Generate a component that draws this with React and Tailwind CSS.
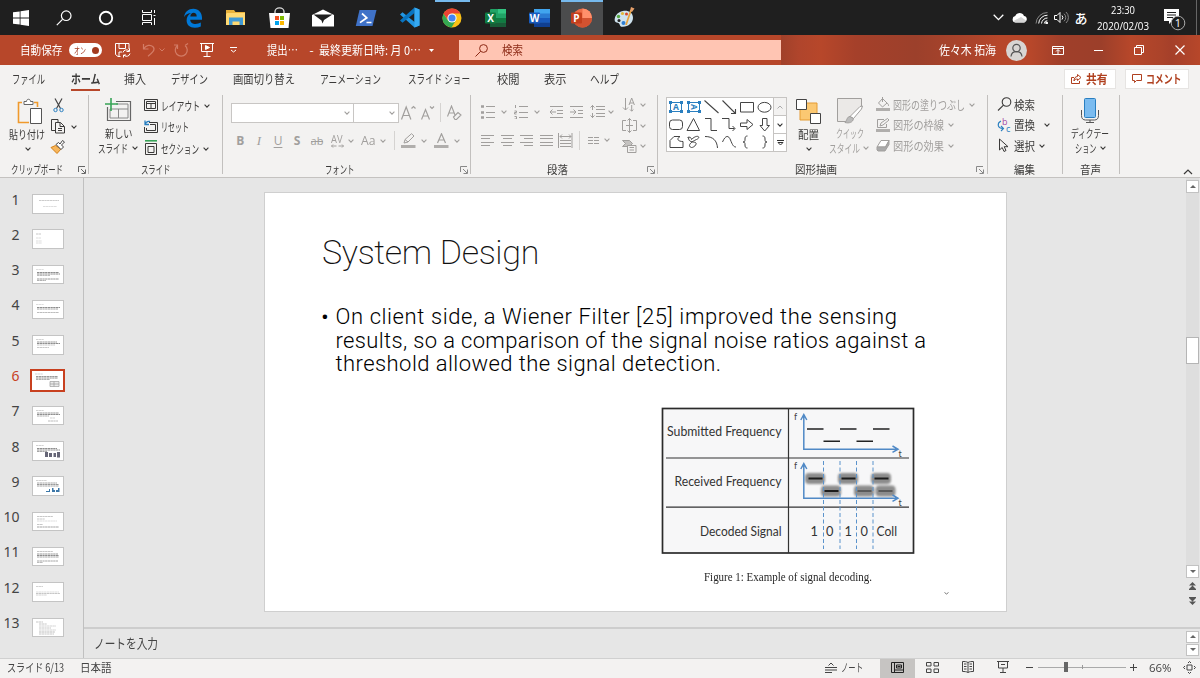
import React, { useLayoutEffect, useRef } from "react";

/* Text set to a fixed advance width, either condensed or letter-spaced. */
function Fit({ w, track = false, className = "", children }) {
  const ref = useRef(null);
  useLayoutEffect(() => {
    const el = ref.current;
    const run = () => {
      el.style.transform = "none";
      el.style.letterSpacing = "0px";
      const nat = el.getBoundingClientRect().width;
      if (!nat) return;
      if (track) el.style.letterSpacing = (w - nat) / el.textContent.length + "px";
      else el.style.transform = `scaleX(${w / nat})`;
    };
    run();
    if (document.fonts && document.fonts.ready) document.fonts.ready.then(run);
  }, [w, track]);
  return (
    <span className={"flex shrink-0 whitespace-nowrap leading-none " + className} style={{ width: w }}>
      <span ref={ref} className="inline-block origin-left">{children}</span>
    </span>
  );
}

const Svg = ({ w, h, className = "", children, ...p }) => (
  <svg width={w} height={h} viewBox={`0 0 ${w} ${h}`} className={"block shrink-0 " + className} fill="none" stroke="currentColor" strokeWidth="1" {...p}>
    {children}
  </svg>
);

const Chev = ({ className = "" }) => (
  <Svg w={6} h={4} className={className} strokeWidth="1.1"><path d="M.6 .7 3 3.1 5.4 .7" /></Svg>
);

const Launcher = ({ className = "" }) => (
  <Svg w={8} h={8} className={className}><path d="M.5 6V.5H7M3 3l4 4M7.5 3.5v4h-4" /></Svg>
);

const Group = ({ className, label, children }) => (
  <div className={"mt-[2px] flex h-[79px] shrink-0 flex-col border-r border-[#c2c0be] " + className}>
    <div className="h-[67px] shrink-0">{children}</div>
    <div className="flex h-[15px] shrink-0 items-center text-[11.5px]">{label}</div>
  </div>
);

const Cell = ({ className, children }) => (
  <div className={"flex h-full shrink-0 items-center justify-center " + className}>{children}</div>
);

function Office({ letter, kind }) {
  return (
    <Svg w={23} h={20} stroke="none">
      {kind === "x" && (<g><rect x="6" y="1" width="16" height="18" rx="1" fill="#21a366" /><path d="M14 1h8v4.5h-8z" fill="#33c481" /><path d="M6 10h16v4.500H6z" fill="#107c41" /><path d="M6 14.500h16V19H6z" fill="#185c37" /></g>)}
      {kind === "w" && (<g><rect x="6" y="1" width="16" height="18" rx="1" fill="#2b7cd3" /><path d="M6 1h16v4.500H6z" fill="#41a5ee" /><path d="M6 10h16v4.500H6z" fill="#185abd" /><path d="M6 14.500h16V19H6z" fill="#103f91" /></g>)}
      {kind === "p" && (<g><circle cx="12.500" cy="10" r="9.500" fill="#ed6c47" /><path d="M12.500 .500A9.500 9.500 0 0 1 22 10h-9.500z" fill="#ff8f6b" /><path d="M3 10h19a9.500 9.500 0 0 1-19 0z" fill="#d35230" /></g>)}
      <rect x="1" y="4.500" width="11" height="11" rx="1" fill={kind === "x" ? "#107c41" : kind === "w" ? "#185abd" : "#c43e1c"} />
      <text x="6.500" y="13.600" textAnchor="middle" fontSize="10" fontWeight="700" fill="#fff" fontFamily="Open Sans, sans-serif">{letter}</text>
    </Svg>
  );
}

function Taskbar() {
  return (
    <div className="flex h-[35px] shrink-0 bg-[#1f1f1f] text-white">
      <Cell className="w-[42.5px]"><Svg w={16} h={16} stroke="none" fill="#fff"><path d="M0 2.300 6.700 1.400v6.200H0zM7.500 1.200 16 0v7.600H7.500zM0 8.400h6.700v6.200L0 13.700zM7.500 8.400H16V16l-8.500-1.200z" /></Svg></Cell>
      <Cell className="w-[42.5px]"><Svg w={16} h={16} strokeWidth="1.2"><circle cx="10.200" cy="5.700" r="4.800" /><path d="M6.500 9.400.8 15.200" /></Svg></Cell>
      <Cell className="w-[42.5px]"><Svg w={16} h={16} strokeWidth="1.900"><circle cx="8" cy="8" r="6.200" /></Svg></Cell>
      <Cell className="w-[42.5px]"><Svg w={16} h={15}><path d="M1.500 0v2.500h9V0M1.500 4.500h9v6h-9zM1.500 15v-2.500h9V15M13.500 0v3M13.500 8v7M12.500 5.500h2" /></Svg></Cell>
      <Cell className="ml-[1.500px] w-[43.2px]"><Svg w={20} h={20} stroke="none"><path fill="#0078d7" d="M1 9.300C1.800 3.700 5.500 .8 10.300 .8c5.500 0 8.700 4 8.700 9v2H7.200c.2 3 2.700 4.200 5.300 4.200 2 0 3.800-.5 5.300-1.400v4c-1.800.8-3.900 1.200-6 1.200-5.100 0-8.200-2.900-8.200-7.500 0-3.200 1.700-5.800 4.500-7.200-4 .2-6.100 2.100-7.100 4.200zm6.300-.9h6.400c0-2.400-1.200-3.600-3.100-3.600-1.800 0-3 1.300-3.300 3.600z" /></Svg></Cell>
      <Cell className="w-[43.2px]"><Svg w={20} h={17} stroke="none"><path d="M0 1h8l1.500 2H19v13H0z" fill="#e8b23c" /><path d="M1 4h18v12H0V5z" fill="#ffd972" /><path d="M3 16V8.500h14V16h-3.500v-3.500h-7V16z" fill="#3f9ad6" /></Svg></Cell>
      <Cell className="w-[43.2px]"><Svg w={21} h={22} stroke="none"><path d="M6 8V4.500a4.500 3.700 0 0 1 9 0V8" stroke="#ddd" strokeWidth="1.300" /><path d="M0 6h21l-1.500 15h-18z" fill="#fff" /><path d="M6 9h4v4H6z" fill="#f25022" /><path d="M11 9h4v4h-4z" fill="#7fba00" /><path d="M6 14h4v4H6z" fill="#00a4ef" /><path d="M11 14h4v4h-4z" fill="#ffb900" /></Svg></Cell>
      <Cell className="w-[43.2px]"><Svg w={22} h={18} stroke="none"><path d="M0 6 11 .5 22 6v11.500H0z" fill="#fff" /><path d="M1.500 5.500h19L12 11l-1.500 3.500-1-3z" fill="#1f1f1f" /></Svg></Cell>
      <Cell className="w-[43.2px]"><Svg w={22} h={18} stroke="none"><path d="M4.500 1h17L17.500 17H.8z" fill="#3f72c8" /><path d="m7 4.500 4.800 4.300-6.800 4.800M11.500 13.500h5" stroke="#fff" strokeWidth="1.700" /></Svg></Cell>
      <Cell className="w-[43.2px]"><Svg w={21} h={21} stroke="none"><path d="m15.500.5 5 2v16l-5 2L1 7.500 3.500 5.300 15.500 15z" fill="#2196e3" /><path d="M15.500.5 1 13.500l2.500 2.200L15.500 6z" fill="#0874c0" /><path d="m15.500.5 5 2v16l-5 2z" fill="#35a9f2" /></Svg></Cell>
      <div className="ml-[4.300px] mr-[4.400px] flex h-full w-[35px] shrink-0 flex-col items-center bg-[linear-gradient(#76b9ed_2px,transparent_2px)] pt-[8px]"><Svg w={20} h={20} stroke="none"><circle cx="10" cy="10" r="9.500" fill="#fbc116" /><path d="M1.500 5.700A9.500 9.500 0 0 1 18.300 5.500H10L6 12z" fill="#ea4335" /><path d="M1.500 5.700A9.500 9.500 0 0 0 9.500 19.500L13.500 13 6 12.500z" fill="#34a853" /><circle cx="10" cy="10" r="4.600" fill="#fff" /><circle cx="10" cy="10" r="3.600" fill="#4285f4" /></Svg></div>
      <Cell className="w-[43.2px]"><Office letter="X" kind="x" /></Cell>
      <Cell className="w-[43.2px]"><Office letter="W" kind="w" /></Cell>
      <Cell className="w-[42.500px] bg-[linear-gradient(#76b9ed_2px,#4b4c4d_2px)]"><Office letter="P" kind="p" /></Cell>
      <Cell className="w-[43.2px]"><Svg w={21} h={21} stroke="none"><path d="M9 4C3 5 0 10 .8 14c.7 2 2.700 1.500 4 2.200 1.500 1 .5 3.300 3.200 3.600 6 .5 11-4 11-9C19 6 14.500 3.200 9 4z" fill="#cfe3ee" /><circle cx="4.500" cy="9.500" r="1.700" fill="#57a845" /><circle cx="8.500" cy="6.500" r="1.600" fill="#e2b93b" /><circle cx="12.500" cy="7" r="1.500" fill="#d9482b" /><circle cx="5" cy="13.500" r="1.500" fill="#222" /><circle cx="9.500" cy="16" r="2" fill="#2d7dd2" /><path d="m17 3-5 15" stroke="#e8a33d" strokeWidth="1.700" /><path d="m16 4 1-4 3.500 1.500L18 5z" fill="#e7a06a" /></Svg></Cell>
      <div className="ml-auto flex h-full items-center">
        <Svg w={11} h={7} strokeWidth="1.300"><path d="m.7.8 4.800 4.800L10.300.8" /></Svg>
        <Svg w={15} h={11} stroke="none" className="ml-[8px]"><path d="M3.500 10.500a3.300 3.300 0 0 1-.3-6.500A4.800 4.800 0 0 1 12 4a3.300 3.300 0 0 1 .2 6.500z" fill="#fff" /><path d="M1.500 9 9 5l5 3.500-1.500 2h-9z" fill="#d4d4d4" /></Svg>
        <Svg w={13} h={13} className="ml-[8px]"><path d="M1 12.500A11.500 11.500 0 0 1 12.500 1.500" stroke="#888" /><path d="M3.700 12.500a8.700 8.700 0 0 1 8.800-8.300M6.500 12.500A6 6 0 0 1 12.500 7M9.300 12.500a3 3 0 0 1 3-2.800" /><circle cx="11.700" cy="12" r="1" fill="#fff" /></Svg>
        <Svg w={15} h={13} className="ml-[6px]"><path d="M.5 4.500H3l3-3v10l-3-3H.5z" /><path d="M8 4.500a3 3 0 0 1 0 4" /><path d="M10 2.700a5 5 0 0 1 0 7.600M12 1a7.500 7.500 0 0 1 0 11" stroke="#888" /></Svg>
        <span className="ml-[6px] w-[13px] font-medium text-[13px] leading-none">あ</span>
        <div className="ml-[9px] mr-[1px] flex w-[52px] flex-col items-center gap-[5px] font-['Open_Sans',sans-serif] text-[11px]">
          <Fit w={24}>23:30</Fit>
          <Fit w={52}>2020/02/03</Fit>
        </div>
        <Svg w={22} h={22} className="ml-[14px] mt-[5px]"><path d="M0 0h15v12H8l-3 3v-3H0z" fill="#fff" stroke="none" /><path d="M3 3.500h9M3 6h9M3 8.500h6" stroke="#1f1f1f" /><circle cx="14" cy="14" r="6.800" fill="#1f1f1f" stroke="#aaa" /><text x="14" y="18" fontSize="11" textAnchor="middle" fill="#fff" stroke="none" fontFamily="Open Sans, sans-serif">1</text></Svg>
        <div className="ml-[10.500px] mr-[3px] h-full w-px bg-[#666]" />
      </div>
    </div>
  );
}

function TitleBar() {
  return (
    <div className="flex h-[30px] shrink-0 items-center bg-[#b7472a] text-[12px] text-white">
      <Fit w={42.5} className="ml-[20px]">自動保存</Fit>
      <div className="ml-[6.500px] flex h-[14px] w-[33px] items-center rounded-full bg-white pl-[5px] text-[#a33a1f]">
        <Fit w={12} className="text-[9px]">オン</Fit>
        <div className="ml-[5.500px] h-[7px] w-[7px] rounded-full bg-[#a33a1f]" />
      </div>
      <Svg w={16} h={15} className="ml-[13px]"><path d="M5.500 13.500H3L.5 11.500V.500H14V6M4 .500v5h6.500v-5M4 13.500V9h3" /><path d="M8 9.500a3.500 3.500 0 0 1 6-1.500M14.500 5.500V8.500h-3M15 10.500a3.500 3.500 0 0 1-6 1.700M8.500 14.500V12h2.500" /></Svg>
      <Svg w={15} h={14} strokeWidth="1.200" className="ml-[11px] text-[#d37c66]"><path d="M1.500 1v5h5M1.800 5.700C4 2 8.500 1.300 11 3.700c3 3-1 6.500-5 9.500" /></Svg>
      <Svg w={6} h={4} className="ml-[2px] text-[#d37c66]"><path d="m.5.5 2.500 2.500L5.500.5" /></Svg>
      <Svg w={15} h={14} strokeWidth="1.200" className="ml-[9px] text-[#d37c66]"><path d="M3.500 2.500a6 6 0 1 0 7.500 0M3.500 6V2H0M11 2.500l3-2" /></Svg>
      <Svg w={14} h={14} className="ml-[11px]"><path d="M0 .500h14M1.500.5v8h11v-8M7 8.500V13M3.500 13.500h7" /><path d="m5.500 2.500 4 2-4 2z" fill="currentColor" /></Svg>
      <Svg w={7} h={6} className="ml-[15.500px]"><path d="M0 .5h7M1 3l2.500 2L6 3" /></Svg>
      <Fit w={31} className="ml-[30px]">提出⋯</Fit>
      <span className="ml-[12px] w-[4px] leading-none">-</span>
      <Fit w={102} className="ml-[5.500px]">最終更新日時: 月 0⋯</Fit>
      <Svg w={5} h={3} stroke="none" fill="#fff" className="ml-[8px]"><path d="M0 0h5L2.500 3z" /></Svg>
      <div className="ml-[24.500px] flex h-[19.5px] w-[322px] shrink-0 items-center bg-[#ffc5b3] text-[#8c2a16]">
        <Svg w={13} h={13} className="ml-[16px]"><circle cx="8.500" cy="4.500" r="3.900" /><path d="M5.700 7.300.5 12.500" /></Svg>
        <Fit w={21} className="ml-[14px]">検索</Fit>
      </div>
      <div className="flex h-full w-[419px] items-center bg-[linear-gradient(90deg,#a0412a_0px,#b0452c_18px,#b7472a_40px,#a5402a_75px,#9c402b_135px,#ac442b_190px,#b7472a_220px,#b7472a_250px,#a03f2a_280px,#9c3f2a_320px,#b7472a_350px,#ab432a_380px,#a5402a_390px,#b7472a_419px)]">
        <Fit w={57} className="ml-[158px]">佐々木 拓海</Fit>
        <Svg w={21} h={21} className="ml-[10px] text-[#555]" strokeWidth="1.200"><circle cx="10.500" cy="10.500" r="10.500" fill="#d8d5d2" stroke="none" /><circle cx="10.500" cy="8" r="3.700" /><path d="M5 16.500c.3-3 2.500-4.800 5.500-4.800s5.200 1.800 5.500 4.800" /></Svg>
        <Svg w={12} h={9} className="ml-[25px]"><path d="M.5.5h11v8H.5zM.5 2.500h11M6 8V4M4 5.500l2-2 2 2" /></Svg>
        <div className="ml-[30px] h-px w-[9px] bg-white" />
        <Svg w={10} h={10} className="ml-[31px]"><path d="M.5 2.500h7v7h-7zM2.500 2V.5h7v7H8" /></Svg>
        <Svg w={10} h={10} className="ml-[31px]" strokeWidth="1.200"><path d="m.5.5 9 9m0-9-9 9" /></Svg>
      </div>
    </div>
  );
}

function Tabs() {
  return (
    <div className="flex h-[28px] shrink-0 items-center pb-px text-[12px] text-[#3b3a39]">
      <Fit w={33} className="ml-[12px]">ファイル</Fit>
      <div className="ml-[25.500px] mt-[5px] flex h-[20px] flex-col justify-between border-b-2 border-[#b7472a] pt-[2px]">
        <Fit w={29.5} className="font-bold">ホーム</Fit>
      </div>
      <Fit w={22} className="ml-[24px]">挿入</Fit>
      <Fit w={37} className="ml-[25px]">デザイン</Fit>
      <Fit w={62} className="ml-[25px]">画面切り替え</Fit>
      <Fit w={61} className="ml-[25px]">アニメーション</Fit>
      <Fit w={62} className="ml-[27px]">スライド ショー</Fit>
      <Fit w={22.5} className="ml-[27px]">校閲</Fit>
      <Fit w={22.5} className="ml-[24px]">表示</Fit>
      <Fit w={29} className="ml-[24px]">ヘルプ</Fit>
      <div className="ml-auto mr-[11.500px] flex gap-[9px] font-bold text-[#b0401f]">
        <div className="flex h-[20px] w-[52px] items-center border border-[#e6e4e2] bg-white pl-[6px]">
          <Svg w={11} h={10}><path d="M3 3.500H.5v6h8V7M6.500.5l3.500 3-3.500 3V5C4.500 5 3.500 5.500 3 7c0-3 1.500-4.500 3.500-4.500z" /></Svg>
          <Fit w={21.5} className="ml-[4px]">共有</Fit>
        </div>
        <div className="flex h-[20px] w-[64px] items-center border border-[#e6e4e2] bg-white pl-[6px]">
          <Svg w={10} h={9}><path d="M.5.5h9v6h-5l-2 2v-2h-2z" /></Svg>
          <Fit w={35.5} className="ml-[4px]">コメント</Fit>
        </div>
      </div>
    </div>
  );
}

const BigLabel = ({ children, w, className = "" }) => <Fit w={w} className={"text-[11.5px] " + className}>{children}</Fit>;

function Gallery() {
  return (
    <div className="ml-[8px] mt-[2px] flex h-[55px] w-[121px] border border-[#c6c4c2] bg-white">
      <Svg w={106} h={53} stroke="#444">
        <g stroke="#2a7fc0"><path d="M3.500 4.500h11v9h-11z" /><path d="M21.500 4.500h11v9h-11z" /></g>
        <g fill="#2a7fc0" stroke="none"><path d="M2 3h3v3H2zM13 3h3v3h-3zM2 12h3v3H2zM13 12h3v3h-3zM20 3h3v3h-3zM31 3h3v3h-3zM20 12h3v3h-3zM31 12h3v3h-3z" />
          <text x="9" y="12" fontSize="8.500" fontWeight="700" textAnchor="middle" fontFamily="Open Sans, sans-serif">A</text>
          <text transform="translate(24 9) rotate(90)" x="0" y="0" fontSize="8.500" fontWeight="700" textAnchor="middle" fontFamily="Open Sans, sans-serif">A</text></g>
        <path d="m37.500 2.500 14 12.500M55.500 2.500 68 15M68.500 11v4.500H64" strokeWidth="1.100" />
        <path d="M73.500 4.500h13v9.500h-13z" /><ellipse cx="97.500" cy="9.300" rx="6.500" ry="4.900" />
        <rect x="2.500" y="22" width="13" height="9.500" rx="3" /><path d="m26.500 20.500 6 12h-12.500zM38 20.500h6v12h6M55 20.500h7v10h5.500M65.500 28l2.500 2.500-2.500 2.500" />
        <path d="M73.500 25h6.500v-3.500l6 5-6 5V28.500h-6.500zM95.500 20.500h4.500v7h2.500L97.700 33l-4.700-5.500h2.500z" />
        <path d="M3 49.500v-7l4-4h6c-4 2.500-2 5 3 5v6zM20.500 39.500c2-1 4 0 4 2 6-6 10-2 5 0-7 3-9 7-5 8 3 0 6-4 4-5-3-1-7 0-7-5" />
        <path d="M38 38.500c8 0 12 4 12.500 11.500M55.500 44c3-7 6-7 8-2s3 7 5.500 7M80.500 38c-2 0-2.500 1-2.500 3s0 3-2 3c2 0 2 1 2 3s.5 3 2.500 3M95.500 38c2 0 2.500 1 2.500 3s0 3 2 3c-2 0-2 1-2 3s-.5 3-2.500 3" />
      </Svg>
      <div className="flex w-[13px] flex-col border-l border-[#c6c4c2] text-[#333]">
        <div className="flex flex-1 items-center justify-center bg-[#f3f2f1] text-[#aaa]"><Svg w={6} h={4}><path d="m.5 3.500 2.500-2.500 2.500 2.500" /></Svg></div>
        <div className="flex flex-1 items-center justify-center border-t border-[#c6c4c2]"><Chev /></div>
        <div className="flex flex-1 items-center justify-center border-t border-[#c6c4c2]"><Svg w={7} h={6}><path d="M0 .5h7M1 2.500l2.500 2.500L6 2.500z" /></Svg></div>
      </div>
    </div>
  );
}

const lines = (pts) => pts.map(([x1, x2, y]) => `M${x1} ${y}h${x2 - x1}`).join("");

function Ribbon() {
  return (
    <div className="flex h-[85px] shrink-0 border-b border-[#c4c2c0] text-[#3b3a39]">
      <Group className="w-[89px]" label={<><Fit w={52} className="ml-[11px]">クリップボード</Fit><Launcher className="ml-[15px] text-[#666]" /></>}>
        <div className="flex">
          <div className="ml-[9px] flex w-[36px] flex-col items-center">
            <Svg w={26} h={27} className="ml-[5px] mt-[3px]"><path d="M5 4.500H1.500v20H12M17 4.500h3.500V9" stroke="#f09a2c" strokeWidth="1.600" /><path d="M7 6.500v-3h2.500c0-3 4-3 4 0H16v3z" fill="#fff" stroke="#666" /><path d="M13.500 10.500h11v15h-11z" fill="#fff" stroke="#555" /></Svg>
            <BigLabel w={36} className="mt-[4px]">貼り付け</BigLabel>
            <Chev className="mr-[-2px] mt-[6px]" />
          </div>
          <div className="ml-[5px] mt-[3px] flex flex-col">
            <Svg w={18} h={15}><path d="m5 .5 5.500 10M12 .5 6.500 10.500" stroke="#444" strokeWidth="1.200" /><g stroke="#2a7fc0"><circle cx="5.500" cy="12" r="1.700" /><circle cx="11.500" cy="12" r="1.700" /></g></Svg>
            <div className="mt-[6px] flex items-center"><Svg w={16} h={15}><path d="M5 11.500H1.500V.500H8V3M5.500 3.500h5l4 4v6.500h-9zM10 3.500v4h4M8 9.500h4M8 11.500h4" /></Svg><Chev className="ml-[5px]" /></div>
            <Svg w={17} h={15} className="mt-[6px]"><path d="m1 7.500 6 6L11 9 5.500 5.500z" fill="#f7b65b" stroke="#d58117" /><path d="m6 4.500 5 5 2.500-2.500-2-2 3-3L12.500.5 10 4 8.500 2.500z" fill="#fff" stroke="#444" /></Svg>
          </div>
        </div>
      </Group>

      <Group className="w-[134px]" label={<Fit w={29.5} className="ml-[52px]">スライド</Fit>}>
        <div className="flex">
          <div className="ml-[9px] flex w-[40px] flex-col">
            <Svg w={28} h={25} className="ml-[6px] mt-[2px]"><path d="M3.500 10v13.500h23v-19H12" stroke="#666" strokeWidth="1.200" /><path d="M6 12v9h18V7H12M14.500 12v9M6 12h18" stroke="#888" /><path d="M7 1v13M1 7h13" stroke="#38a457" strokeWidth="1.600" /></Svg>
            <BigLabel w={27.5} className="ml-[7px] mt-[6px]">新しい</BigLabel>
            <div className="mt-[3px] flex items-center"><BigLabel w={30}>スライド</BigLabel><Chev className="ml-[4px]" /></div>
          </div>
          <div className="ml-[6px] mt-[2px] flex flex-col text-[12px]">
            <div className="flex h-[17px] items-center"><Svg w={14} h={12} className="mb-[1px]"><path d="M.5.5h13v11H.5zM2.500 2.500h9v7h-9zM2.500 4.500h9M7 4.500v5" /></Svg><Fit w={39} className="ml-[3px]">レイアウト</Fit><Chev className="ml-[4px]" /></div>
            <div className="mt-[4px] flex h-[17px] items-center"><Svg w={14} h={13} className="mb-[1px]"><path d="M5 2.500h8.500v10H.5V7M6 4.500h5.500v6h-9V8" /><path d="M1 .5v4h4M1 4.500C2 1.500 4 1 6 1.500" stroke="#2a7fc0" strokeWidth="1.300" /></Svg><Fit w={28} className="ml-[3px]">リセット</Fit></div>
            <div className="mt-[5px] flex h-[17px] items-center"><Svg w={14} h={15} className="mb-[2px]"><path d="M1 .7h12" stroke="#38a457" strokeWidth="1.800" /><path d="M1.500 3.500h11v11h-11zM4 6.500h6v6H4z" /></Svg><Fit w={38} className="ml-[3px]">セクション</Fit><Chev className="ml-[4px]" /></div>
          </div>
        </div>
      </Group>

      <Group className="w-[248px]" label={<><Fit w={29.5} className="ml-[102px]">フォント</Fit><Launcher className="ml-[105.500px] text-[#888]" /></>}>
        <div className="text-[#a19f9d]">
          <div className="flex h-[34px] items-center pl-[7.500px] pt-px">
            <div className="flex h-[20px] w-[123px] items-center justify-end border border-[#c8c6c4] bg-white pr-[3px]"><Chev /></div>
            <div className="flex h-[20px] w-[45px] items-center justify-end border border-l-0 border-[#c8c6c4] bg-white pr-[3px]"><Chev /></div>
            <Svg w={15} h={15} className="ml-[2px]" strokeWidth="1.200"><path d="M.5 14.500 5.200 2l4.700 12.500M2.200 10.500h6M10.500 3.500l2-2 2 2" /></Svg>
            <Svg w={14} h={15} className="ml-[5px]" strokeWidth="1.200"><path d="M.5 14.500 4.500 4.500l4 10M2 11h5M9 1.500l2 2 2-2" /></Svg>
            <div className="ml-[5px] h-[19px] w-px bg-[#d5d3d1]" />
            <Svg w={15} h={16} className="ml-[6px]" strokeWidth="1.100"><path d="M.5 11.500 4.500 1l3.500 9M2 8h5" /><path d="m6.500 12 4.500-4.500 3 2.500-4.500 4.500H8z" /></Svg>
          </div>
          <div className="flex h-[23px] items-center pl-[8px] font-['Open_Sans',sans-serif] text-[12px] leading-none">
            <Cell className="w-[18.500px] font-bold">B</Cell>
            <Cell className="w-[19px] font-['Liberation_Serif',serif] text-[13px] italic">I</Cell>
            <Cell className="w-[19px]"><span className="underline underline-offset-2">U</span></Cell>
            <Cell className="w-[19px] font-bold">S</Cell>
            <Cell className="w-[21px] text-[11px]"><span className="bg-[linear-gradient(currentColor,currentColor)] bg-[length:100%_1px] bg-[position:0_60%] bg-no-repeat">ab</span></Cell>
            <Cell className="w-[19px]"><div className="flex flex-col items-center"><Fit w={11.5} className="text-[10px]">AV</Fit><Svg w={13} h={4}><path d="M.5 2h5M7.500 2h5M2 .5.500 2 2 3.500M11 .5 12.500 2 11 3.500" /></Svg></div></Cell>
            <Cell className="w-[9px]"><Chev /></Cell>
            <Cell className="ml-[2px] w-[22px]"><Fit w={14.5}>Aa</Fit></Cell>
            <Cell className="w-[7px]"><Chev /></Cell>
            <div className="ml-[7px] h-[19px] w-px bg-[#d5d3d1]" />
            <Svg w={15} h={16} className="ml-[6px]"><path d="m3 10 1-3.500L10.500.7 13 3 7 9zM4 6.500 7 9" /><path d="M0 13.500h14.500" strokeWidth="3" stroke="#b0aeac" /></Svg>
            <Chev className="ml-[5px]" />
            <Svg w={15} h={16} className="ml-[7px]" strokeWidth="1.200"><path d="M3.500 10 7.500.8l4 9.200M5 7h5" /><path d="M0 13.500h14.500" strokeWidth="3" stroke="#b0aeac" /></Svg>
            <Chev className="ml-[5px]" />
          </div>
        </div>
      </Group>

      <Group className="w-[187px]" label={<><Fit w={21} className="ml-[76px]">段落</Fit><Launcher className="ml-[79px] text-[#888]" /></>}>
        <div className="flex text-[#a19f9d]">
          <div className="w-[146px]">
            <div className="flex h-[33px] items-center pl-[9.500px]">
              <Svg w={14} h={14}><path d={lines([[5, 14, 1.5], [5, 14, 7.5], [5, 14, 12.5]])} /><path d="M0 1.500h3M0 7.500h3M0 12.500h3" strokeWidth="2.400" /></Svg><Chev className="ml-[6px]" />
              <Svg w={14} h={14} className="ml-[7px]"><path d={lines([[5, 14, 1.5], [5, 14, 7.5], [5, 14, 12.5]])} /><path d="M1.500 0v3M.5 6h2v1.500h-2V9h2M.5 11.500h2V14h-2" /></Svg><Chev className="ml-[6px]" />
              <Svg w={13} h={12} className="ml-[10px]"><path d="M0 .500h13M7 4.500h6M7 7.500h6M0 11.500h13M0 6h6M2.500 3.500 0 6l2.500 2.500" /></Svg>
              <Svg w={13} h={12} className="ml-[7px]"><path d="M0 .500h13M8 4.500h5M8 7.500h5M0 11.500h13M0 6h6M3.500 3.500 6 6 3.500 8.500" /></Svg>
              <Svg w={15} h={13} className="ml-[7px]"><path d="M6 1.500h9M6 4.500h9M6 8.500h9M6 11.500h9M2.500 0v5M.5 2.500l2-2 2 2M2.500 8v5M.5 10.500l2 2 2-2" /></Svg><Chev className="ml-[3px]" />
            </div>
            <div className="flex h-[24px] items-center pl-[10px]">
              <Svg w={14} h={13}><path d={lines([[0, 13, 1.5], [0, 9, 4.5], [0, 13, 8.5], [0, 9, 11.5]])} /></Svg>
              <Svg w={14} h={13} className="ml-[5.500px]"><path d={lines([[0, 13, 1.5], [2, 11, 4.5], [0, 13, 8.5], [2, 11, 11.5]])} /></Svg>
              <Svg w={14} h={13} className="ml-[5.500px]"><path d={lines([[0, 13, 1.5], [4, 13, 4.5], [0, 13, 8.5], [4, 13, 11.5]])} /></Svg>
              <Svg w={14} h={13} className="ml-[5.500px]"><path d={lines([[0, 13, 1.5], [0, 13, 4.5], [0, 13, 8.5], [0, 13, 11.5]])} /></Svg>
              <Svg w={15} h={15} className="ml-[4px]"><path d="M.5 0v15M14 0v15M2 3.500h11M4 1.500 2 3.500l2 2M11 1.500l2 2-2 2M2 7.500h11M2 10.500h11M2 13.500h11" /></Svg>
              <div className="ml-[6px] h-[19px] w-px bg-[#d5d3d1]" />
              <Svg w={11} h={9} className="ml-[8px]"><path d="M0 1.500h5M6 1.500h5M0 4.500h5M6 4.500h5M0 7.500h5M6 7.500h5" /></Svg><Chev className="ml-[5px]" />
            </div>
          </div>
          <div className="ml-[4.500px] mt-[2px] flex flex-col gap-[6px]">
            <div className="flex items-center"><Svg w={15} h={15}><path d="M3.500 1v12M1 10.500l2.500 2.500L6 10.500M7 8l2.700-7 2.700 7M8 6h3.500M9.700 8v6M8 12.500l1.700 1.700L11.400 12.500" /></Svg><Chev className="ml-[3px]" /></div>
            <div className="flex items-center"><Svg w={15} h={15}><path d="M4 2.500H.5v10H4M11 2.500h3.500v10H11M4 7.500h7M7.500.5v14M5.500 2.500l2-2 2 2M5.500 12.500l2 2 2-2" /></Svg><Chev className="ml-[3px]" /></div>
            <div className="flex items-center"><Svg w={15} h={14}><path d="M.5 1.500h7l3 3-3 3h-7l3-3z" fill="#c4c2c0" /><path d="M5.500 6.500h8.500v7H5.500z" fill="#f3f2f1" /><path d="M7.500 8.500h4.500M7.500 11h4.500" /></Svg><Chev className="ml-[3px]" /></div>
          </div>
        </div>
      </Group>

      <Group className="w-[330px]" label={<><Fit w={42} className="ml-[136.500px]">図形描画</Fit><Launcher className="ml-[139.500px] text-[#888]" /></>}>
        <div className="flex">
          <Gallery />
          <div className="ml-[9px] flex w-[25px] flex-col items-center">
            <Svg w={25} h={26} className="mt-[3px]"><path d="M4 5h17v17H4z" fill="#fbc872" stroke="#e49b32" /><path d="M.5 1.500h10v10H.5zM14.500 15.500h10v10h-10z" fill="#fff" stroke="#444" /></Svg>
            <BigLabel w={21} className="mr-px mt-[5px]">配置</BigLabel>
            <Chev className="mt-[6px]" />
          </div>
          <div className="ml-[7.500px] flex w-[41px] flex-col text-[#a19f9d]">
            <Svg w={28} h={28} className="ml-[7px] mt-[2px]"><path d="M13 24.500H1.500v-23h24V12" fill="#ebe9e7" /><path d="M14 19.500 24 9.500l2.500-.5-1 3-8 9.500z" fill="#fff" /><path d="M14 19.500c-3 0-3 4-5 6 4 1 8 0 8.500-4z" fill="#bbb" /></Svg>
            <BigLabel w={28} className="ml-[7px] mt-[3px]">クイック</BigLabel>
            <div className="mt-[3px] flex items-center"><BigLabel w={31}>スタイル</BigLabel><Chev className="ml-[3px]" /></div>
          </div>
          <div className="ml-[6.500px] mt-[2px] flex flex-col gap-[5.500px] text-[12px] text-[#a19f9d]">
            <div className="flex h-[15px] items-center"><Svg w={14} h={14} className="mb-[1px]"><path d="m2.500 6 4-4.500L11 6 6.500 10zM6.500 0v5M11 6c1.500 1 1.500 2 1.500 3" /><path d="M0 12.500h14" strokeWidth="3" stroke="#b0aeac" /></Svg><Fit w={72} className="ml-[3px]">図形の塗りつぶし</Fit><Chev className="ml-[4px]" /></div>
            <div className="flex h-[15px] items-center"><Svg w={14} h={14} className="mb-[1px]"><path d="M8 1.500H1.500v8h9V6M4 8l1-3L11.500.5l1.500 1.500-6 5z" /><path d="M0 12.500h14" strokeWidth="3" stroke="#b0aeac" /></Svg><Fit w={51} className="ml-[3px]">図形の枠線</Fit><Chev className="ml-[4px]" /></div>
            <div className="flex h-[15px] items-center"><Svg w={14} h={13} className="mb-[1px]"><path d="M1 8 5 1.500h8L9.500 8z" fill="#fff" /><path d="M1 8v3l1 1h7l4-6.500v-4L9.500 8H1z" fill="#aaa" /></Svg><Fit w={51} className="ml-[3px]">図形の効果</Fit><Chev className="ml-[4px]" /></div>
          </div>
        </div>
      </Group>

      <Group className="w-[75px]" label={<Fit w={21} className="ml-[25.500px]">編集</Fit>}>
        <div className="flex flex-col gap-[5.500px] pl-[9px] pt-[2px] text-[12px]">
          <div className="flex h-[15px] items-center"><Svg w={15} h={15} strokeWidth="1.100"><circle cx="9.500" cy="5" r="4.300" /><path d="M6.500 8.200 1 13.500" /></Svg><Fit w={21} className="ml-[2px]">検索</Fit></div>
          <div className="flex h-[15px] items-center"><Svg w={16} h={19} stroke="none" fontFamily="Open Sans, sans-serif" fontSize="9"><text x="5" y="8.500" fill="#a349a4">b</text><text x="9" y="15.500" fill="#2a7fc0">c</text><path d="M4 5c-4 2-4 7 2 7.500M4 10l2.500 2.500L4 15" stroke="#2a7fc0" strokeWidth="1.100" /></Svg><Fit w={21} className="ml-[1px]">置換</Fit><Chev className="ml-[9px]" /></div>
          <div className="flex h-[15px] items-center"><Svg w={15} h={15}><path d="M2.500 1v11l2.700-2.500L7 13.500l2-1-1.800-3.800H11z" /></Svg><Fit w={21} className="ml-[2px]">選択</Fit><Chev className="ml-[4px]" /></div>
        </div>
      </Group>

      <Group className="w-[57px]" label={<Fit w={21} className="ml-[17px]">音声</Fit>}>
        <div className="flex flex-col pl-[8px]">
          <Svg w={18} h={27} className="ml-[10px] mt-[2px]"><rect x="3.500" y="1.500" width="11" height="19" rx="1" fill="#7bbcf0" stroke="#2a7fc0" /><path d="M.5 13v5.500c0 3 1.500 4.500 4 4.500h9c2.500 0 4-1.500 4-4.500V13M9 23v2.500M5 25.500h8" stroke="#555" /></Svg>
          <BigLabel w={38} className="mt-[4px]">ディクテー</BigLabel>
          <div className="mt-[3px] flex items-center pl-[4px]"><BigLabel w={21.5}>ション</BigLabel><Chev className="ml-[3px]" /></div>
        </div>
      </Group>
      <Svg w={10} h={6} className="ml-auto mr-[7px] mt-[76px]" strokeWidth="1.200"><path d="m1 5 4-4 4 4" /></Svg>
    </div>
  );
}

const THUMBS = [
  [[6, 20, 5.5, 0.45], [10, 14, 11.5, 0.3]],
  [[3, 5, 4, 0.5], [3, 5, 8, 0.3], [3, 6, 11, 0.3], [3, 6, 13, 0.3]],
  [[3, 8, 3.5, 0.3], [4, 22, 6.5, 1], [4, 23, 8, 1], [4, 13, 9.5, 0.6], [4, 22, 13, 0.9], [4, 9, 14.5, 0.7]],
  [[3, 8, 3.5, 0.3], [4, 23, 6.5, 1], [4, 21, 8, 0.8], [4, 22, 11.5, 0.6]],
  [[3, 8, 3.5, 0.4], [4, 20, 6, 0.9], [4, 23, 7.5, 1], [4, 18, 9, 0.5], [4, 12, 11.5, 0.5]],
  [[3, 8, 3, 0.4], [4, 22, 5.5, 0.9], [4, 22, 7, 1], [4, 14, 8.5, 0.7]],
  [[3, 8, 3.5, 0.4], [4, 22, 6, 0.9], [4, 23, 7.5, 1], [4, 12, 9, 0.7], [17, 5, 11, 0.4], [15, 10, 14, 0.6]],
  [[3, 8, 3.5, 0.4], [4, 20, 6.5, 1], [4, 23, 8, 1], [4, 10, 9.5, 0.8]],
  [[3, 11, 3.5, 0.4], [4, 20, 6, 0.8], [4, 22, 7.500, 0.9], [4, 22, 9, 0.8]],
  [[4, 16, 3.5, 0.5], [4, 8, 6, 0.5], [4, 20, 8, 0.3], [4, 6, 11.5, 0.5], [4, 22, 14, 0.8]],
  [[4, 16, 3.5, 0.5], [4, 21, 6, 0.9], [4, 22, 7.500, 1], [4, 22, 9, 0.8], [4, 21, 13, 0.8], [4, 6, 14.500, 0.6]],
  [[3, 7, 3.5, 0.4], [3, 23, 9, 0.3], [3, 24, 10.5, 0.5], [3, 11, 12, 0.4]],
  [[3, 7, 3, 0.5], [6, 8, 5, 0.5], [6, 17, 7, 0.4], [6, 12, 9, 0.5], [6, 17, 11, 0.4], [6, 16, 13, 0.6], [6, 15, 15, 0.5]],
];

function Thumb({ n, rows }) {
  const on = n === 6;
  return (
    <div className="flex h-[35.3px] shrink-0">
      <span className={"mt-[-2.500px] w-[19.500px] text-right font-['Noto_Sans',sans-serif] text-[14px] leading-[15px] " + (on ? "text-[#c8401f]" : "text-[#444]")}>{n}</span>
      <div className={on ? "-mt-[1.500px] ml-[10.500px] h-[23px] w-[35px] border-[2.5px] border-[#c8401f] bg-white" : "ml-[12.500px] h-[19.500px] w-[31.500px] border border-[#c4c4c4] bg-white"}>
        <Svg w={30} h={18} stroke="none">
          {rows.map(([x, w, y, o], i) => (
            <line key={i} x1={x} x2={x + w} y1={y} y2={y} stroke="#444" strokeWidth="1" strokeDasharray="2.300 .4" opacity={o * 0.6} />
          ))}
          {n === 6 && <path d="M18 10.500h9v5h-9zM18 12.200h9M18 13.800h9M22 10.500v5" stroke="#999" strokeWidth=".7" />}
          {n === 8 && <path d="M12 10h3v5h-3zM16 11h3v4h-3zM20.500 11h2.500v4h-2.500zM24 10h3v5.500h-3z" fill="#667" />}
          {n === 9 && <path d="M13 15v-1h3v-2h1v3zM19 15v-4h1.500v2H22v2zM23 15v-2h2v-2h1.500v4z" fill="#3c77a8" />}
        </Svg>
      </div>
    </div>
  );
}

function Figure() {
  const f = "Lato, Open Sans, sans-serif";
  const fit = { lengthAdjust: "spacingAndGlyphs" };
  const glow = [[8.5, 71], [24.5, 83.5], [41.5, 71], [57.5, 83.5], [74.5, 71], [79, 83.5]];
  return (
    <svg width="254" height="147" viewBox="0 0 254 147" className="block" fill="none">
      <defs><filter id="soft" x="-40%" y="-80%" width="180%" height="260%"><feGaussianBlur stdDeviation="1.100" /></filter></defs>
      <rect x="1.500" y="1.500" width="251" height="144.500" fill="#f7f7f8" stroke="#2b2b2b" strokeWidth="1.700" />
      <path d="M127.500 1v145M5 51h243M5 100.200h243" stroke="#333" strokeWidth="1.200" />
      <g stroke="#222" strokeWidth="1.500"><path d="M146 22H162.500M179 22H195.500M212 22H228.500M162.500 34.300H179M195.500 34.300H212" /></g>
      <g filter="url(#soft)">
        {glow.map(([x, y], i) => <rect key={i} x={135.5 + x} y={y - 5} width="20" height="11" rx="4" fill="#8c8c8c" />)}
      </g>
      <path d="M147.500 71.500h14M163.500 84h14M180.500 71.500h14M213.500 71.500h14" stroke="#1d1d1d" strokeWidth="2.200" />
      <path d="M196.500 84h14M217.500 84h14" stroke="#4a4a4a" strokeWidth="1.600" />
      <g stroke="#5089c6" strokeWidth="1.500">
        <path d="M142.800 8v34.200h93M139.800 13l3-5.500 3 5.500M231.500 39l5.500 3.200-5.500 3.200" />
        <path d="M142.800 57v34.200h93M139.800 62l3-5.500 3 5.500M231.500 88l5.500 3.200-5.500 3.200" />
      </g>
      <path d="M162.500 54v88M179 54v88M195.500 54v88M212 54v88" stroke="#5b93cc" strokeWidth="1" strokeDasharray="4 2.500" />
      <g fill="#333" fontFamily={f} fontSize="12.800">
        <text x="6" y="29" textLength="114.500" {...fit}>Submitted Frequency</text>
        <text x="13.500" y="79" textLength="107" {...fit}>Received Frequency</text>
        <text x="39" y="128.500" textLength="81.500" {...fit}>Decoded Signal</text>
        <text x="149.500" y="128.500">1</text><text x="165" y="128.500">0</text><text x="183.500" y="128.500">1</text><text x="199.500" y="128.500">0</text>
        <text x="215.500" y="128.500" textLength="20.500" {...fit}>Coll</text>
      </g>
      <g fill="#444" fontFamily={f} fontSize="9"><text x="133" y="12.500">f</text><text x="237.500" y="49.500">t</text><text x="133" y="61.500">f</text><text x="237.500" y="99">t</text></g>
    </svg>
  );
}

const ScrollBtn = ({ up, className = "" }) => (
  <div className={"flex w-[13px] shrink-0 items-center justify-center border border-[#c2c2c2] bg-white " + className}>
    <Svg w={6} h={3} stroke="none" fill="#666">{up ? <path d="M0 3h6L3 0z" /> : <path d="M0 0h6L3 3z" />}</Svg>
  </div>
);

function Workspace() {
  return (
    <div className="flex h-[479.500px] shrink-0 bg-[#e6e6e6]">
      <div className="flex w-[84px] shrink-0 flex-col overflow-hidden border-r border-[#c0c0c0] pt-[16px]">
        {THUMBS.map((rows, i) => <Thumb key={i} n={i + 1} rows={rows} />)}
      </div>
      <div className="flex flex-1 flex-col">
        <div className="flex h-[449px] shrink-0">
          <div className="ml-[180px] mt-[14px] flex h-[420px] w-[743px] shrink-0 flex-col border border-[#cfcfcf] bg-white text-[#262626]">
            <Fit w={217} track className="ml-[57px] mt-[41px] h-[35px] items-center font-['Roboto',sans-serif] text-[34px] font-extralight text-[#111]">System Design</Fit>
            <div className="ml-[56px] mt-[36.500px] flex font-['Roboto',sans-serif] text-[22px] font-light text-black">
              <span className="w-[14.500px] text-[24px] leading-[23.500px]">•</span>
              <div>
                <div className="flex h-[23.500px] items-center"><Fit w={562} track>On client side, a Wiener Filter [25] improved the sensing</Fit></div>
                <div className="flex h-[23.500px] items-center"><Fit w={591} track>results, so a comparison of the signal noise ratios against a</Fit></div>
                <div className="flex h-[23.500px] items-center"><Fit w={386} track>threshold allowed the signal detection.</Fit></div>
              </div>
            </div>
            <div className="ml-[396px] mt-[31px]"><Figure /></div>
            <Fit w={168} className="ml-[439px] mt-[18px] font-['Liberation_Serif',serif] text-[11.500px]">Figure 1: Example of signal decoding.</Fit>
            <Svg w={5} h={3} className="ml-[679px] mt-[8px] text-[#777]"><path d="M.5.5Q2.500 3.500 4.500.5" /></Svg>
          </div>
          <div className="ml-auto mr-[1px] flex w-[13px] flex-col items-center bg-[#dedede]">
            <ScrollBtn up className="mt-[2px] h-[13px]" />
            <div className="mt-[144px] h-[27px] w-[13px] shrink-0 border border-[#b5b5b5] bg-white" />
            <ScrollBtn className="mt-[201px] h-[13px]" />
            <div className="flex w-full flex-1 flex-col items-center bg-[#e6e6e6]">
              <Svg w={7} h={8} stroke="none" fill="#555" className="mt-[4px]"><path d="M0 3.500h7L3.500 0zM0 7h7L3.500 3.500zM0 7h7v1H0z" /></Svg>
              <Svg w={7} h={8} stroke="none" fill="#555" className="mt-[7px]"><path d="M0 0h7v1H0zM0 1h7L3.500 4.500zM0 4.500h7L3.500 8z" /></Svg>
            </div>
          </div>
        </div>
        <div className="flex flex-1 items-center border-t-2 border-[#cdcdcd]">
          <Fit w={64} className="mb-[2px] ml-[9.500px] text-[13px] text-[#444]">ノートを入力</Fit>
          <div className="ml-auto mr-[1px] flex flex-col gap-px"><ScrollBtn up className="h-[12px]" /><ScrollBtn className="h-[12px]" /></div>
        </div>
      </div>
    </div>
  );
}

function StatusBar() {
  return (
    <div className="flex h-[20.500px] shrink-0 items-center border-t border-[#d0d0d0] bg-[#f3f2f1] pb-[2px] text-[11.5px] text-[#444]">
      <Fit w={57} className="ml-[6.500px]">スライド 6/13</Fit>
      <Fit w={31.5} className="ml-[16px]">日本語</Fit>
      <Svg w={12} h={11} className="ml-[714px]"><path d="M0 5.500h12M0 8h12M0 10.500h7M3.500 3.500 6 1l2.500 2.500" /></Svg>
      <Fit w={22} className="ml-[4px]">ノート</Fit>
      <div className="-mb-[2px] ml-[17px] flex w-[35px] shrink-0 justify-center self-stretch bg-[#c6c4c2] pt-[3.500px]"><Svg w={13} h={11} stroke="#222"><path d="M.5.5h12v10H.5zM3.500.5v10M3.500 8h9M5.500 3h5v3h-5z" /><path d="M6.500 4.500h3" /></Svg></div>
      <Cell className="w-[35px]"><Svg w={13} h={11}><path d="M.5.5h4.500v3.500H.5zM8 .500h4.500v3.500H8zM.5 7h4.500v3.500H.5zM8 7h4.500v3.500H8z" /></Svg></Cell>
      <Cell className="w-[35px]"><Svg w={12} h={12}><path d="M6 1.500C4.500.5 2.500.5.5.5v10c2 0 4 0 5.500 1 1.500-1 3.500-1 5.500-1V.500c-2 0-4 0-5.500 1v10M2 3h2.500M2 5.500h2.500M2 8h2.500M7.500 3H10M7.500 5.500H10M7.500 8H10" /></Svg></Cell>
      <Cell className="w-[35px]"><Svg w={12} h={12}><path d="M0 .500h12M1.500.5v6.500h9V.500M4 3.500h4M6 7v4M3 11.500h6" /></Svg></Cell>
      <div className="ml-[6px] h-px w-[7px] bg-[#444]" />
      <div className="ml-[5px] flex h-full items-center">
        <div className="h-px w-[26px] bg-[#aaa]" /><div className="h-[10px] w-[4px] bg-[#666]" /><div className="h-px w-[14px] bg-[#aaa]" /><div className="h-[4px] w-px bg-[#999]" /><div className="h-px w-[43px] bg-[#aaa]" />
      </div>
      <Svg w={7} h={7} className="ml-[4px]"><path d="M0 3.500h7M3.500 0v7" /></Svg>
      <Fit w={22.5} className="ml-[12px] font-['Open_Sans',sans-serif]">66%</Fit>
      <Svg w={13} h={13} className="ml-[11px]"><path d="M4 4h5v5H4zM5 2 6.500.5 8 2M5 11l1.500 1.500L8 11M2 5 .5 6.500 2 8M11 5l1.500 1.500L11 8" /></Svg>
    </div>
  );
}

export default function App() {
  return (
    <div className="flex h-[678px] w-[1200px] flex-col overflow-hidden bg-[#f3f2f1] font-['Noto_Sans_CJK_JP',sans-serif]">
      <Taskbar />
      <TitleBar />
      <Tabs />
      <Ribbon />
      <Workspace />
      <StatusBar />
    </div>
  );
}
